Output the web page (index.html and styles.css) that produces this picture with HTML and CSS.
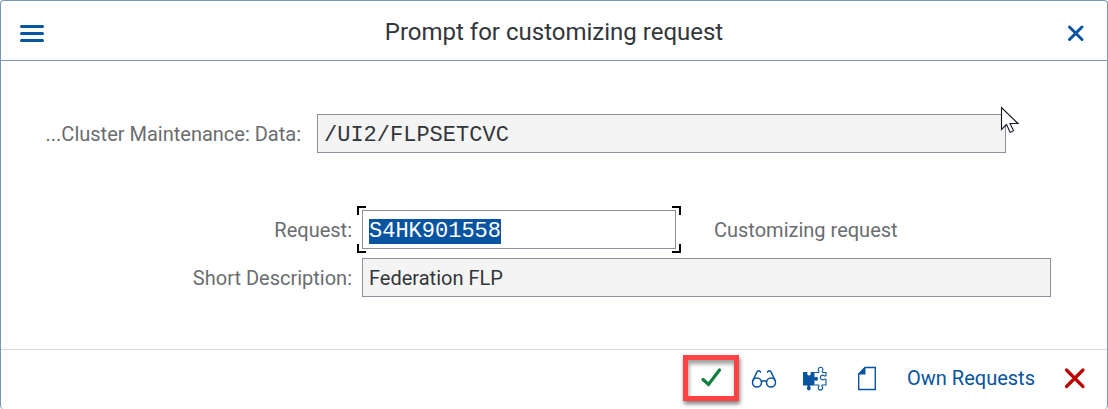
FILE: index.html
```html
<!DOCTYPE html>
<html lang="en">
<head>
<meta charset="utf-8">
<meta name="viewport" content="width=device-width, initial-scale=1">
<title>Prompt for customizing request</title>
<link rel="stylesheet" href="styles.css">
</head>
<body>
<main class="dialog">
  <header class="dialog-header">
    <button class="header-button" type="button" aria-label="Menu">
      <svg width="26" height="20" viewBox="0 0 26 20" fill="none" stroke="currentColor" stroke-width="3" stroke-linecap="round"><path d="M2.500 2.500h21M2.500 9.500h21M2.500 16.500h21"/></svg>
    </button>
    <h1 class="dialog-title">Prompt for customizing request</h1>
    <button class="header-button" type="button" aria-label="Close">
      <svg width="20" height="20" viewBox="0 0 20 20" fill="none" stroke="currentColor" stroke-width="3" stroke-linecap="round"><path d="M3.500 3l12.500 12.500M16 3L3.500 15.500"/></svg>
    </button>
  </header>

  <form class="dialog-body">
    <div class="row row-object">
      <label class="label label-object" for="object">...Cluster Maintenance: Data:</label>
      <div class="field">
        <input class="input input-readonly input-mono" id="object" type="text" value="/UI2/FLPSETCVC" readonly>
        <svg class="pointer" width="20" height="28" viewBox="0 0 20 28"><path d="M1.500 1.500v22l5-5 3.500 7.500q2 .5 3.500-1.500l-3.500-7h8z" fill="#fff" stroke="#14141f" stroke-width="1.100"/></svg>
      </div>
    </div>
    <div class="row row-request">
      <label class="label" for="request">Request:</label>
      <div class="field field-focus">
        <input class="input input-mono" id="request" type="text" value="S4HK901558">
        <span class="corner corner-tl"></span><span class="corner corner-tr"></span>
        <span class="corner corner-bl"></span><span class="corner corner-br"></span>
      </div>
      <span class="note">Customizing request</span>
    </div>
    <div class="row row-description">
      <label class="label" for="description">Short Description:</label>
      <div class="field">
        <input class="input input-readonly" id="description" type="text" value="Federation FLP" readonly>
      </div>
    </div>
  </form>

  <footer class="dialog-footer">
    <button class="tool tool-confirm" type="button" aria-label="Continue">
      <svg width="24" height="24" viewBox="0 0 24 24" fill="none" stroke="currentColor" stroke-width="3.200" stroke-linecap="round"><path d="M4 13.500l5.500 5L20.500 4"/></svg>
    </button>
    <button class="tool tool-display" type="button" aria-label="Display">
      <svg width="26" height="24" viewBox="0 0 26 24" fill="none" stroke="currentColor" stroke-width="1.500" stroke-linecap="round"><circle cx="6" cy="16.500" r="4.500"/><circle cx="20" cy="16.500" r="4.500"/><path d="M10.500 15.500q2.500-1.500 5 0M1.800 14.500L6.300 5.500q1.700-1.800 3.200.5M24.200 14.500L19.700 5.500q-1.700-1.800-3.200.5"/></svg>
    </button>
    <button class="tool" type="button" aria-label="Enhancements">
      <svg width="26" height="26" viewBox="0 0 26 26"><path fill="currentColor" d="M1 7h4.500Q4.600 10.500 7 10.500T8.500 7H12.500v5.500q1-.8 1.500-.8a2.100 2.100 0 1 1 0 4.200q-.5 0-1.500-.8V20.500H8.300q-.9.800.2 1.800a2 2 0 1 1-3.400 0q1-1.100.1-1.800H1z"/><path fill="none" stroke="currentColor" stroke-width="1.100" d="M12.500 7.500h4q1-.8 0-2a2.300 2.300 0 1 1 4.200 0q-1 1.200 0 2H24v3q-1 1-2.200 0a2.300 2.300 0 1 0 0 4q1.200-1 2.200 0V20h-3.700q-1 .8 0 1.700a2.200 2.200 0 1 1-3.800 0q1-.9 0-1.700H12.500"/></svg>
    </button>
    <button class="tool" type="button" aria-label="New request">
      <svg width="20" height="26" viewBox="0 0 20 26"><path fill="none" stroke="currentColor" stroke-width="1.400" d="M8 2.500h10.300v22H1.700V9z"/><path fill="currentColor" d="M8.500 2v7.500H1z"/></svg>
    </button>
    <button class="tool-text" type="button">Own Requests</button>
    <button class="tool tool-cancel" type="button" aria-label="Cancel">
      <svg width="24" height="24" viewBox="0 0 24 24" fill="none" stroke="currentColor" stroke-width="3.200" stroke-linecap="round"><path d="M3.500 4l16.500 16.500M20 4L3.500 20.500"/></svg>
    </button>
  </footer>
</main>
<script src="script.js"></script>
</body>
</html>
```
FILE: styles.css
```css
* {
  box-sizing: border-box;
}

body {
  margin: 0;
  background: #fff;
  color: #32363a;
  font-family: Roboto, "Noto Sans", sans-serif;
  font-size: 20px;
}

button {
  display: flex;
  align-items: center;
  justify-content: center;
  padding: 0;
  border: 0;
  background: none;
  color: #0854a0;
  font: inherit;
  cursor: pointer;
}

.dialog {
  display: flex;
  flex-direction: column;
  min-height: 100vh;
  border: 1px solid #7897b7;
  border-bottom: 0;
  border-radius: 4px;
}

.dialog-header {
  display: flex;
  align-items: center;
  justify-content: space-between;
  height: 60px;
  padding: 0 8px;
  border-bottom: 1px solid #7897b7;
}

.header-button {
  width: 46px;
  height: 44px;
  padding-top: 6px;
}

.dialog-title {
  margin: 0;
  padding-top: 2px;
  font-size: 24px;
  font-weight: 400;
}

.dialog-body {
  flex: 1;
  padding: 53px 56px 52px 39px;
}

.row {
  display: flex;
  align-items: center;
}

.row-object {
  gap: 16px;
  margin: 0 45px 57px 0;
}

.row-request,
.row-description {
  gap: 10px;
}

.row-request {
  margin-bottom: 9px;
}

.label {
  flex: none;
  width: 312px;
  color: #6a6d70;
  text-align: right;
  white-space: nowrap;
}

.label-object {
  width: 261px;
}

.field {
  position: relative;
  flex: 1;
}

.field-focus {
  flex: 314;
}

.note {
  flex: 337;
  margin-left: 28px;
  color: #6a6d70;
  white-space: nowrap;
}

.input {
  display: block;
  width: 100%;
  height: 39px;
  padding: 0 6px;
  border: 1px solid #89919a;
  border-radius: 0;
  outline: 0;
  background: #fff;
  color: #32363a;
  font: inherit;
}

.input-readonly {
  background: #f4f4f4;
}

.input-mono {
  padding-top: 3px;
  font-family: "Liberation Mono", monospace;
  font-size: 22px;
}

.input::selection {
  background: #0854a0;
  color: #fff;
}

.corner {
  position: absolute;
  width: 9px;
  height: 9px;
  border: 0 solid #000;
}

.corner-tl { top: -4px; left: -5px; border-width: 2px 0 0 2px; }
.corner-tr { top: -4px; right: -5px; border-width: 2px 2px 0 0; }
.corner-bl { bottom: -4px; left: -5px; border-width: 0 0 2px 2px; }
.corner-br { bottom: -4px; right: -5px; border-width: 0 2px 2px 0; }

.pointer {
  position: absolute;
  top: -8px;
  right: -14px;
}

.dialog-footer {
  display: flex;
  align-items: center;
  justify-content: flex-end;
  height: 60px;
  padding: 0 6px 3px 0;
  border-top: 1px solid #d9d9d9;
}

.tool {
  width: 52px;
  height: 46px;
}

.tool-confirm {
  width: 56px;
  border: 5px solid #ff4343;
  box-shadow: 1px 3px 4px #00000080, inset 1px 4px 4px #00000060;
  color: #107e3e;
}

.tool-display {
  width: 50px;
}

.tool-text {
  padding: 0 14px;
}

.tool-cancel {
  color: #bb0000;
}
```
FILE: script.js
```js
const request = document.getElementById("request");
request.focus();
request.select();
```
